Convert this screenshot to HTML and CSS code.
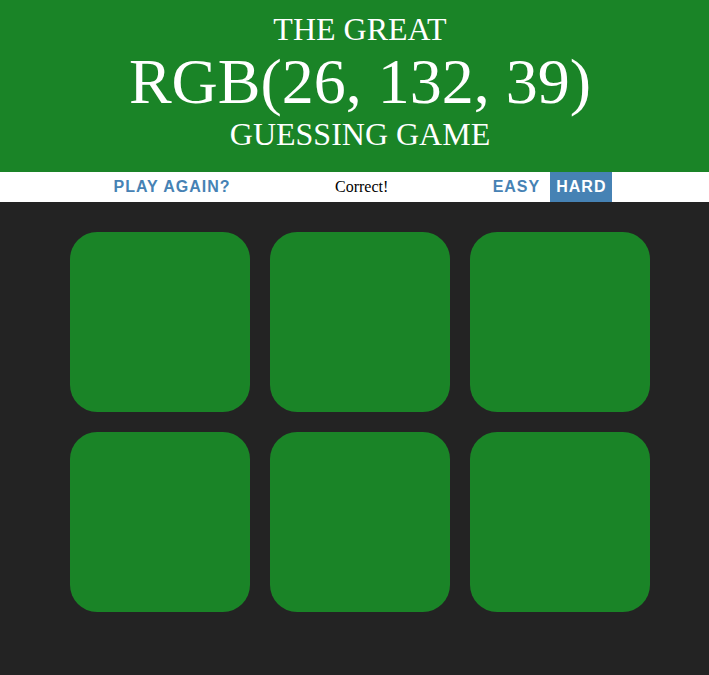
FILE: index.html
```html
<!DOCTYPE html>
<html lang="en">
<head>
<meta charset="utf-8">
<title>Color Game</title>
<link rel="stylesheet" href="styles.css">
</head>
<body>
<div class="page">
  <h1 class="title">
    <span class="title-line">The Great</span>
    <span class="title-line title-color">RGB(26, 132, 39)</span>
    <span class="title-line">Guessing Game</span>
  </h1>
  <div class="stripe">
    <button class="btn">Play Again?</button>
    <span class="message">Correct!</span>
    <button class="btn">Easy</button>
    <button class="btn btn-hard selected">Hard</button>
  </div>
  <div class="board">
    <div class="square"></div>
    <div class="square"></div>
    <div class="square"></div>
    <div class="square"></div>
    <div class="square"></div>
    <div class="square"></div>
  </div>
</div>
</body>
</html>
```
FILE: styles.css
```css
html, body {
  margin: 0;
  padding: 0;
  overflow: hidden;
  background: #232323;
  font-family: "Liberation Serif", "Times New Roman", serif;
}

.page {
  width: 720px;
  height: 675px;
}

.title {
  margin: 0;
  padding: 12px 0 20px;
  background: rgb(26, 132, 39);
  color: #ffffff;
  text-align: center;
  text-transform: uppercase;
  font-weight: normal;
  font-size: 32px;
}

.title-line {
  display: block;
  line-height: 35px;
}

.title-color {
  font-size: 64px;
  line-height: 70px;
}

.stripe {
  height: 30px;
  background: #ffffff;
  display: flex;
  justify-content: center;
  align-items: stretch;
}

.btn {
  border: none;
  background: none;
  margin: 0;
  padding: 0 6px;
  height: 30px;
  font-family: "Liberation Sans", Arial, sans-serif;
  font-size: 16px;
  font-weight: 700;
  letter-spacing: 1px;
  text-transform: uppercase;
  color: steelblue;
}

.btn-hard {
  margin-left: 4px;
}

.selected {
  background: steelblue;
  color: #ffffff;
}

.message {
  width: 250px;
  text-align: center;
  font-size: 16px;
  line-height: 30px;
  color: #000000;
}

.board {
  margin: 30px 0 0 70px;
  display: grid;
  grid-template-columns: repeat(3, 180px);
  gap: 20px;
}

.square {
  height: 180px;
  border-radius: 15%;
  background: rgb(26, 132, 39);
}
```
